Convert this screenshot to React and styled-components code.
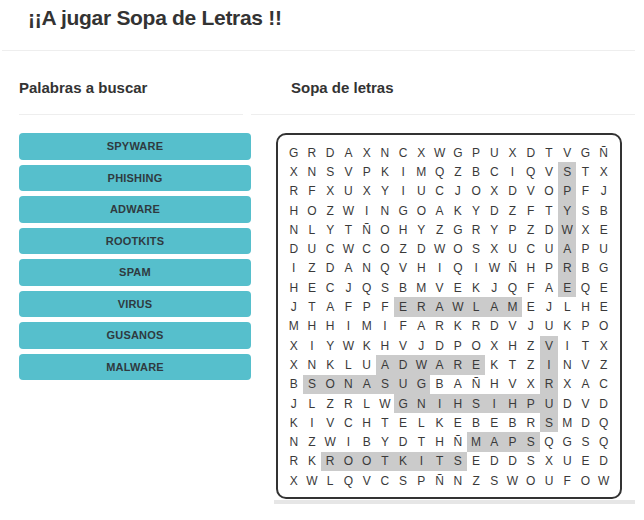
import React from "react";
import styled, { createGlobalStyle } from "styled-components";

const GlobalStyle = createGlobalStyle`
	body {
		margin: 0;
		background: #fff;
		font-family: "Liberation Sans", Arial, sans-serif;
		color: #333;
	}
`;

const Page = styled.div`
	width: 644px;
	height: 520px;
	overflow: hidden;
`;

const Header = styled.header`
	height: 51px;
	margin: 0 9px 0 2px;
	border-bottom: 1px solid #eee;
	box-sizing: border-box;
`;

const Title = styled.h1`
	margin: 0;
	padding: 5px 0 0 26px;
	font-size: 21px;
	line-height: 26px;
	letter-spacing: -0.3px;
	font-weight: bold;
	color: #333;
`;

const Main = styled.main`
	display: flex;
	padding-left: 19px;
`;

const Column = styled.section`
	display: flex;
	flex-direction: column;
	width: ${(p) => p.$width}px;
`;

const Heading = styled.h2`
	margin: 0 ${(p) => p.$trim || 0}px 0 0;
	padding: 28px 0 17px ${(p) => p.$indent || 0}px;
	font-size: 15px;
	line-height: 18px;
	font-weight: bold;
	color: #333;
	border-bottom: 1px solid #eee;
`;

const WordList = styled.div`
	display: flex;
	flex-direction: column;
	gap: 5px;
	margin-top: 18px;
`;

const WordButton = styled.button`
	height: 26.5px;
	width: 232px;
	border: none;
	border-radius: 4px;
	background: #56bfcc;
	color: #2f3a40;
	font-family: "Liberation Sans", Arial, sans-serif;
	font-size: 11px;
	font-weight: bold;
	letter-spacing: 0.2px;
	padding: 0;
	cursor: pointer;
`;

const Board = styled.div`
	margin: 18px 0 0 25px;
	width: 346px;
	box-sizing: border-box;
	border: 2px solid #333;
	border-radius: 10px;
	padding: 8px 7px 7px 6.6px;
`;

const Grid = styled.div`
	display: grid;
	grid-template-columns: repeat(18, 18.24px);
	grid-auto-rows: 19.3px;
`;

const Cell = styled.span`
	display: flex;
	align-items: center;
	justify-content: center;
	font-size: 12px;
	color: #3a3a3a;
	background: ${(p) => (p.$found ? "#cbcbcb" : "transparent")};
`;

const Shelf = styled.div`
	margin: 1px 0 0 23px;
	height: 4px;
	background: #e6e6e6;
`;

const words = ["SPYWARE", "PHISHING", "ADWARE", "ROOTKITS", "SPAM", "VIRUS", "GUSANOS", "MALWARE"];

const rows = [
	"GRDAXNCXWGPUXDTVGÑ",
	"XNSVPKIMQZBCIQVSTX",
	"RFXUXYIUCJOXDVOPFJ",
	"HOZWINGOAKYDZFTYSB",
	"NLYTÑOHYZGRYPZDWXE",
	"DUCWCOZDWOSXUCUAPU",
	"IZDANQVHIQIWÑHPRBG",
	"HECJQSBMVEKJQFAEQE",
	"JTAFPFERAWLAMEJLHE",
	"MHHIMIFARKRDVJUKPO",
	"XIYWKHVJDPOXHZVITX",
	"XNKLUADWAREKTZINVZ",
	"BSONASUGBAÑHVXRXAC",
	"JLZRLWGNIHSIHPUDVD",
	"KIVCHTELKEBEBRSMDQ",
	"NZWIBYDTHÑMAPSQGSQ",
	"RKROOTKITSEDDSXUED",
	"XWLQVCSPÑNZSWOUFOW",
];

// [row, col, length, horizontal]
const found = [
	[1, 15, 7, false],
	[8, 6, 7, true],
	[11, 5, 6, true],
	[10, 14, 5, false],
	[12, 1, 7, true],
	[13, 6, 8, true],
	[15, 10, 4, true],
	[16, 2, 8, true],
];

const isFound = (r, c) =>
	found.some(([fr, fc, len, h]) =>
		h ? r === fr && c >= fc && c < fc + len : c === fc && r >= fr && r < fr + len
	);

function App() {
	return (
		<Page>
			<GlobalStyle />
			<Header>
				<Title>¡¡A jugar Sopa de Letras !!</Title>
			</Header>
			<Main>
				<Column $width={232}>
					<Heading $trim={8}>Palabras a buscar</Heading>
					<WordList>
						{words.map((w) => (
							<WordButton key={w}>{w}</WordButton>
						))}
					</WordList>
				</Column>
				<Column $width={384}>
					<Heading $indent={40}>Sopa de letras</Heading>
					<Board>
						<Grid>
							{rows.map((row, r) =>
								Array.from(row).map((ch, c) => (
									<Cell key={r + "-" + c} $found={isFound(r, c)}>
										{ch}
									</Cell>
								))
							)}
						</Grid>
					</Board>
					<Shelf />
				</Column>
			</Main>
		</Page>
	);
}

export default App;
